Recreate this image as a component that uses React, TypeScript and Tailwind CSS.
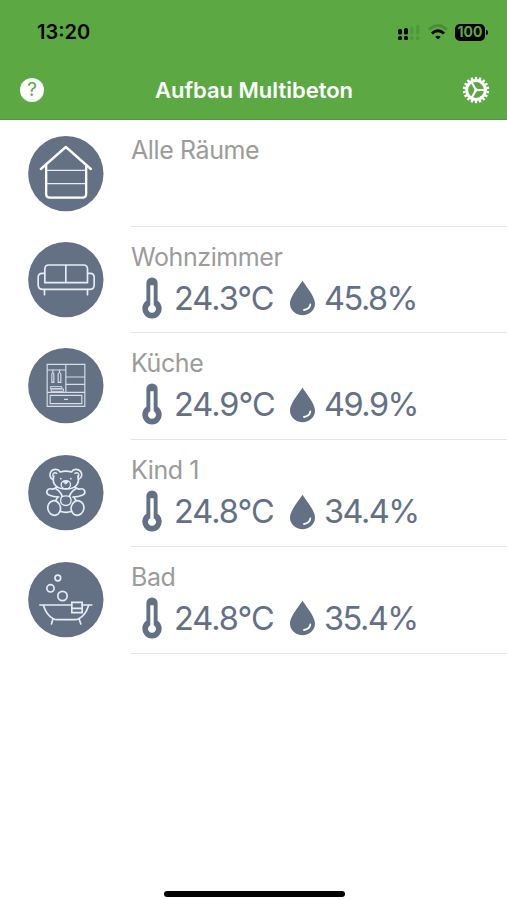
import type { ReactNode } from 'react'

type Room = {
  name: string
  icon: ReactNode
  temperature?: string
  humidity?: string
}

function RoomIcon({ cy, children }: { cy: number; children: ReactNode }) {
  return (
    <svg viewBox={`23.5 ${cy - 113} 228 228`} className="h-19 w-19" fill="none" stroke="#e6edf6" strokeLinecap="round" strokeLinejoin="round">
      <circle cx="137" cy={cy} r="113" fill="#647084" stroke="none" />
      {children}
    </svg>
  )
}

const house = (
  <RoomIcon cy={130}>
    <g stroke="#ffffff" strokeWidth="7">
      <path d="M62 116 137 50l75 66" />
      <path d="M78 105v86q0 11 11 11h98q11 0 11-11v-86" />
    </g>
    <path d="M80 120h116M80 160h116" strokeWidth="4" />
  </RoomIcon>
)

const sofa = (
  <RoomIcon cy={132}>
    <g strokeWidth="5">
      <path d="M74 141V100q0-12 12-12h104q12 0 12 12v41zM137 88v53" />
      <path d="M73 113H66q-12 0-12 12v22q0 14 14 14h140q14 0 14-14v-22q0-12-12-12h-7" />
      <path d="M73 162v15M202 162v15" />
    </g>
  </RoomIcon>
)

const wardrobe = (
  <RoomIcon cy={134}>
    <g strokeWidth="3.5" strokeLinejoin="miter" opacity="0.88">
      <path d="M81 70h113v126H81zM81 154h113M137 70v84M137 108h57M137 130h57M81 87h56" />
      <path d="M90 163h95v25H90zM133 175h9" />
      <path d="M98 87v7M95 99q3-9 6 0v25h-6zM118 87v7M114 99q4-9 8 0v25h-8z" />
      <path d="M92 137h33v6H92zM94 144h36v7H94z" strokeWidth="3" />
    </g>
  </RoomIcon>
)

const teddy = (
  <RoomIcon cy={132}>
    <g strokeWidth="5">
      <path d="M98 92C88 88 87 76 93 68s21-8 27 2q17-5 34 0c6-10 20-10 27-2s4 20-6 24" />
      <path d="M101 82c-7 24 8 39 36 39s43-15 36-39" />
      <path d="M99 83c-4-7 3-14 11-9M175 83c4-7-3-14-11-9" strokeWidth="4" />
      <ellipse cx="137" cy="108" rx="14" ry="12" strokeWidth="4" />
      <path d="M129 98h16l-8 8z" fill="#e6edf6" strokeWidth="3" />
      <path d="M110 115q-8 7-16 6C80 117 75 134 86 139q13 6 30 6" />
      <path d="M164 115q8 7 16 6c14-4 19 13 8 18q-13 6-30 6" />
      <path d="M108 121q14 8 18 22M166 121q-14 8-18 22M112 146l-5 9M162 146l5 9" />
      <ellipse cx="102" cy="178" rx="19" ry="22" transform="rotate(-12 102 178)" />
      <ellipse cx="172" cy="178" rx="19" ry="22" transform="rotate(12 172 178)" />
      <path d="M125 144q12-5 24 0 7 11 1 21-13 11-26 0-6-10 1-21z" strokeWidth="4" />
      <path d="M119 188q18 6 36 0" />
    </g>
    <circle cx="122" cy="90" r="2.5" fill="#e6edf6" stroke="none" />
    <circle cx="152" cy="90" r="2.5" fill="#e6edf6" stroke="none" />
  </RoomIcon>
)

const bath = (
  <RoomIcon cy={134}>
    <g strokeWidth="5">
      <circle cx="113" cy="69" r="8.5" />
      <circle cx="91" cy="100" r="11" />
      <circle cx="127" cy="123" r="14" />
      <path d="M59 150h95M186 150h29" />
      <path d="M70 152q10 29 29 39 5 3 12 3h53q7 0 12-3 20-10 29-39" />
      <path d="M98 193l-4 14M177 193l5 14" />
      <path d="M155 142h31v31h-31zM155 160h31" strokeLinejoin="miter" />
    </g>
  </RoomIcon>
)

const rooms: Room[] = [
  { name: 'Alle Räume', icon: house },
  { name: 'Wohnzimmer', icon: sofa, temperature: '24.3°C', humidity: '45.8%' },
  { name: 'Küche', icon: wardrobe, temperature: '24.9°C', humidity: '49.9%' },
  { name: 'Kind 1', icon: teddy, temperature: '24.8°C', humidity: '34.4%' },
  { name: 'Bad', icon: bath, temperature: '24.8°C', humidity: '35.4%' },
]

function Thermometer() {
  return (
    <svg viewBox="0 0 20 42" className="h-[42px] w-5 shrink-0">
      <path d="M4.4 6a5.6 5.6 0 0 1 11.2 0v17.8a9.7 9.7 0 1 1-11.2 0z" fill="#647084" />
      <path d="M8.3 8.2h3.4v20a4 4 0 1 1-3.4 0z" fill="#ffffff" />
    </svg>
  )
}

function Drop() {
  return (
    <svg viewBox="0 0 25 36" className="h-9 w-[25px] shrink-0">
      <path d="M12.5.5C13.5 3 25 16 25 23.5a12.5 11.8 0 0 1-25 0C0 16 11.5 3 12.5.5z" fill="#647084" />
      <path d="M20.3 24.5q-.5 4.5-6.3 5.5" fill="none" stroke="#ffffff" strokeWidth="1.8" strokeLinecap="round" />
    </svg>
  )
}

function StatusBar() {
  return (
    <div className="flex h-16 items-center justify-between pl-[37px] pr-[19px]">
      <span className="text-[20px] leading-6 font-semibold text-black">13:20</span>
      <div className="flex items-center">
        <svg viewBox="0 0 22 16" className="mt-0.5 h-4 w-[22px]">
          <g fill="#000000">
            <rect x="0" y="4" width="4" height="5.5" rx="1.5" />
            <rect x="6" y="3" width="4" height="6.5" rx="1.5" />
            <rect x="0" y="11" width="4" height="4" rx="1.5" />
            <rect x="6" y="11" width="4" height="4" rx="1.5" />
          </g>
          <g fill="#4f9a3b">
            <rect x="12" y="1.5" width="3.5" height="8" rx="1.5" />
            <rect x="18" y="0" width="3.5" height="9.5" rx="1.5" />
            <rect x="12" y="11" width="3.5" height="4" rx="1.5" />
            <rect x="18" y="11" width="3.5" height="4" rx="1.5" />
          </g>
        </svg>
        <svg viewBox="0 0 20 16" className="ml-2 h-4 w-5" fill="none" strokeWidth="2.6">
          <path d="M1 5.5q9-8 18 0" stroke="#4a8a38" />
          <path d="M4 9.5q6-5.5 12 0" stroke="#000000" strokeWidth="3" />
          <path d="M7.8 13q2.2-1.6 4.4 0L10 15z" fill="#000000" stroke="#000000" strokeWidth="1" />
        </svg>
        <div className="ml-[7px] flex h-[17px] w-[30px] items-center justify-center rounded-[5px] bg-black text-[14px] leading-4 font-bold text-[#5ca944]">
          100
        </div>
        <div className="ml-px h-[5px] w-0.5 rounded-r-full bg-black" />
      </div>
    </div>
  )
}

function Gear() {
  const teeth = Array.from({ length: 18 }, (_, i) => i * 20)

  return (
    <svg viewBox="-14 -14 28 28" className="h-7 w-7" fill="none" stroke="#ffffff">
      <circle r="9.4" strokeWidth="3" />
      {teeth.map((angle) => (
        <path key={angle} d="M0-10.5V-13.2" strokeWidth="2.3" transform={`rotate(${angle})`} />
      ))}
      <path d="M0 0h9M0 0-4.7-8.5M0 0l-4.7 8.5" strokeWidth="2.1" />
      <circle r="1.7" fill="#ffffff" stroke="none" />
    </svg>
  )
}

export default function App() {
  return (
    <div className="flex h-[900px] w-[507px] flex-col overflow-hidden bg-white font-['Inter',sans-serif]">
      <header className="h-[119.5px] shrink-0 border-b border-[#4f983a] bg-[#5ca944]">
        <StatusBar />
        <div className="flex h-[52px] items-center justify-between pr-[17px] pl-5">
          <div className="flex h-6 w-6 items-center justify-center rounded-full bg-white text-[19px] leading-6 text-[#5ca944]">
            ?
          </div>
          <h1 className="pl-0.5 text-[22px] leading-7 font-semibold text-white">Aufbau Multibeton</h1>
          <Gear />
        </div>
      </header>

      <main className="flex-1">
        {rooms.map((room, index) => (
          <div key={room.name} className={`flex pl-[27.5px] ${index === 0 ? 'h-[107px]' : 'h-[106.75px]'}`}>
            <div className={`w-[103.5px] shrink-0 ${index === 0 ? 'pt-4' : 'pt-[15px]'}`}>{room.icon}</div>
            <div className="flex-1 border-b-[1.5px] border-[#e4e4e4] pt-3.5">
              <div className="text-[25px] leading-8 tracking-[-0.4px] text-[#9b9b9b]">{room.name}</div>
              {room.temperature && (
                <div className="mt-1 flex h-[42px] items-center pl-[11px] text-[32.5px] leading-10 tracking-[-1px] text-[#647084]">
                  <Thermometer />
                  <span className="ml-3 w-[99px] pt-0.5 whitespace-nowrap">{room.temperature}</span>
                  <div className="ml-[17px] pt-px">
                    <Drop />
                  </div>
                  <span className="ml-[9px] pt-0.5 tracking-[-1.5px] whitespace-nowrap">{room.humidity}</span>
                </div>
              )}
            </div>
          </div>
        ))}
      </main>

      <footer className="flex h-[9px] shrink-0 items-start justify-center pl-px">
        <div className="h-1.5 w-[181px] rounded-full bg-black" />
      </footer>
    </div>
  )
}
